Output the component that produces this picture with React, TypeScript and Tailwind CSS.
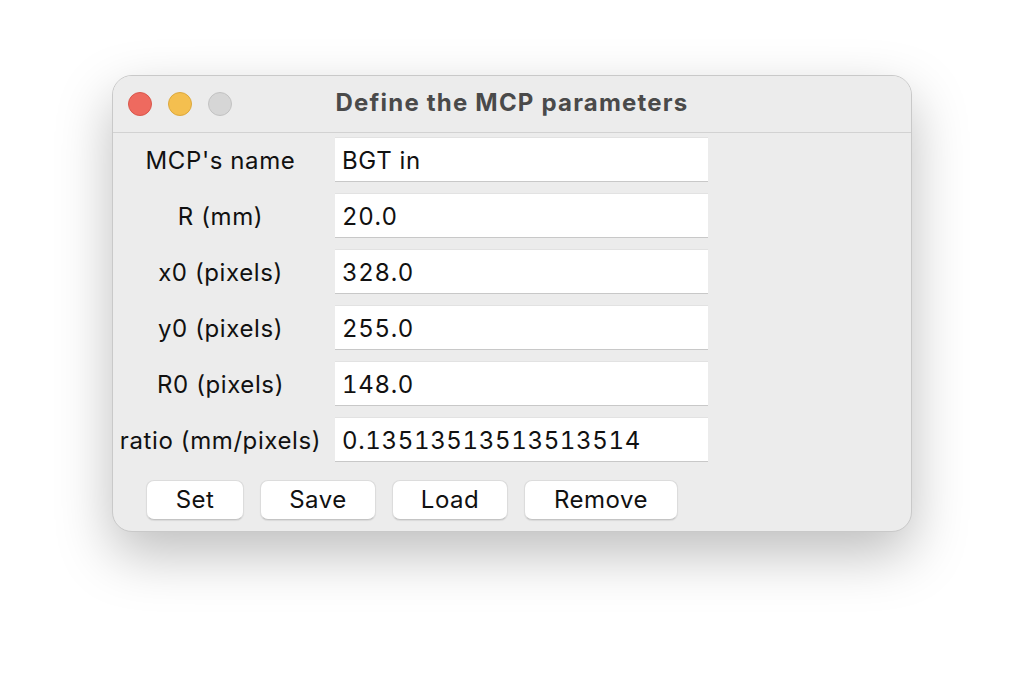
import React from "react";

const rows: [string, string][] = [
  ["MCP's name", "BGT in"],
  ["R (mm)", "20.0"],
  ["x0 (pixels)", "328.0"],
  ["y0 (pixels)", "255.0"],
  ["R0 (pixels)", "148.0"],
  ["ratio (mm/pixels)", "0.13513513513513514"],
];

const buttons: [string, string][] = [
  ["Set", "w-[98px]"],
  ["Save", "w-[116px]"],
  ["Load", "w-[116px]"],
  ["Remove", "w-[154px]"],
];

export default function App() {
  return (
    <div
      className="w-[1024px] h-[680px] bg-white pl-[112px] pt-[75px]"
      style={{ fontFamily: "Inter, 'Liberation Sans', sans-serif" }}
    >
      <div className="w-[800px] h-[457px] rounded-[20px] bg-[#ececec] border border-[#c9c9c9] shadow-[0_22px_55px_rgba(0,0,0,0.26)] overflow-hidden flex flex-col">
        <div className="h-[57px] shrink-0 relative flex items-center justify-center bg-[#ececec] border-b border-[#d2d2d2]">
          <div className="absolute left-[15px] top-[16px] flex gap-[16px]">
            <div className="w-[24px] h-[24px] rounded-full bg-[#ee6a5f] border border-[#d9574c]" />
            <div className="w-[24px] h-[24px] rounded-full bg-[#f4bf4f] border border-[#dca83d]" />
            <div className="w-[24px] h-[24px] rounded-full bg-[#d6d6d6] border border-[#c2c2c2]" />
          </div>
          <span className="text-[24px] font-bold text-[#4a4a4a] tracking-[1.2px] mt-[-2px]">
            Define the MCP parameters
          </span>
        </div>
        <div className="pt-[4px] flex flex-col gap-[11px]">
          {rows.map(([label, value]) => (
            <div key={label} className="flex items-center h-[45px]">
              <div className="w-[215px] text-center text-[24px] text-[#111] tracking-[0.6px] pt-[3px]">
                {label}
              </div>
              <div className="ml-[7px] w-[373px] h-[45px] bg-white border-t border-[#e2e2e2] border-b border-b-[#c8c8c8] flex items-center pl-[7px] pt-[2px] text-[24px] text-[#111] tracking-[0.65px] tabular-nums">
                {value}
              </div>
            </div>
          ))}
        </div>
        <div className="flex gap-[16px] pl-[33px] mt-[18px]">
          {buttons.map(([label, w]) => (
            <div
              key={label}
              className={`${w} h-[40px] bg-white rounded-[8px] border border-[#dcdcdc] border-b-[#c4c4c4] shadow-[0_1px_1px_rgba(0,0,0,0.08)] flex items-center justify-center text-[24px] text-[#111] tracking-[0.5px]`}
            >
              {label}
            </div>
          ))}
        </div>
      </div>
    </div>
  );
}
